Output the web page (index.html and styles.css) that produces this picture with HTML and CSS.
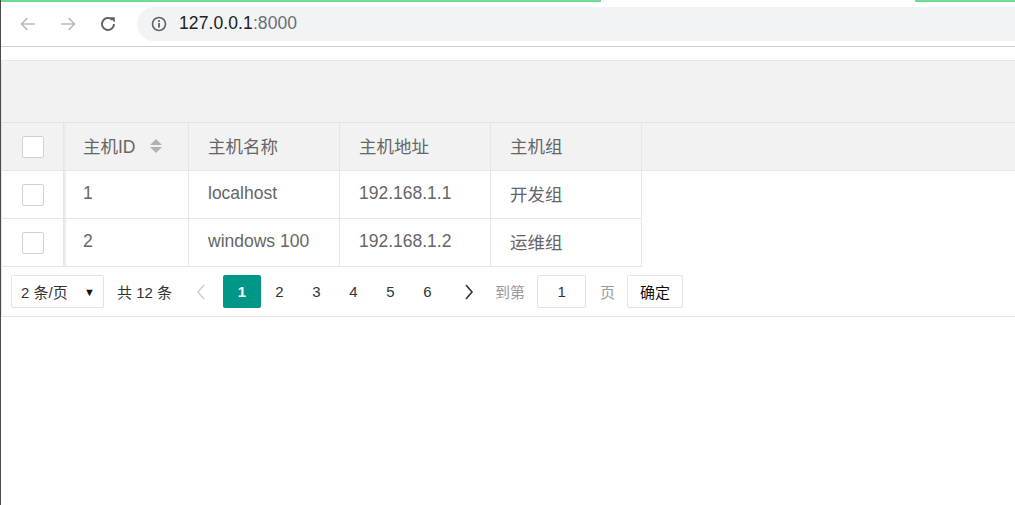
FILE: index.html
```html
<!DOCTYPE html>
<html lang="zh-CN">

<head>
    <meta charset="UTF-8">
    <meta name="viewport" content="width=device-width, initial-scale=1.0">
    <title>主机列表</title>
    <link rel="stylesheet" href="styles.css">
</head>

<body>
    <div class="frame">
        <div class="browser">
            <div class="loadbar"><span class="load-a"></span><span class="load-b"></span></div>
            <div class="nav">
                <svg class="nav-btn" width="20" height="20" viewBox="0 0 20 20"><path d="M17 10H3.5M9.5 4L3.5 10l6 6" fill="none" stroke="#bdbdbd" stroke-width="1.7"/></svg>
                <svg class="nav-btn" width="20" height="20" viewBox="0 0 20 20"><path d="M3 10h13.5M10.5 4l6 6-6 6" fill="none" stroke="#bdbdbd" stroke-width="1.7"/></svg>
                <svg class="nav-btn" width="20" height="20" viewBox="0 0 20 20"><path d="M16 10a6 6 0 1 1-1.8-4.3" fill="none" stroke="#5f6368" stroke-width="2"/><path d="M11.5 3.2h5.3v5.3z" fill="#5f6368"/></svg>
            </div>
            <div class="omnibox">
                <svg width="16" height="16" viewBox="0 0 16 16"><circle cx="8" cy="8" r="6.5" fill="none" stroke="#5f6368" stroke-width="1.6"/><rect x="7.1" y="7" width="1.8" height="4.6" fill="#5f6368"/><rect x="7.1" y="4.2" width="1.8" height="1.8" fill="#5f6368"/></svg>
                <span class="url">127.0.0.1<span class="port">:8000</span></span>
            </div>
        </div>

        <div class="page">
            <div class="table-view">
                <div class="table-tool"></div>

                <div class="row head">
                    <div class="cell col-check"><span class="checkbox"></span></div>
                    <div class="cell col-id">主机ID <span class="sort"><i class="up"></i><i class="down"></i></span></div>
                    <div class="cell col-name">主机名称</div>
                    <div class="cell col-addr">主机地址</div>
                    <div class="cell col-group">主机组</div>
                    <div class="cell col-fill"></div>
                </div>

                <div class="table-body">
                    <div class="row">
                        <div class="cell col-check"><span class="checkbox"></span></div>
                        <div class="cell col-id">1</div>
                        <div class="cell col-name">localhost</div>
                        <div class="cell col-addr">192.168.1.1</div>
                        <div class="cell col-group">开发组</div>
                    </div>
                    <div class="row">
                        <div class="cell col-check"><span class="checkbox"></span></div>
                        <div class="cell col-id">2</div>
                        <div class="cell col-name">windows 100</div>
                        <div class="cell col-addr">192.168.1.2</div>
                        <div class="cell col-group">运维组</div>
                    </div>
                </div>

                <div class="laypage">
                    <div class="limits"><span>2 条/页</span><span class="caret">▼</span></div>
                    <span class="count">共 12 条</span>
                    <span class="page-prev">
                        <svg width="12" height="18" viewBox="0 0 12 18"><path d="M9 2L3 9l6 7" fill="none" stroke="#d2d2d2" stroke-width="1.6"/></svg>
                    </span>
                    <span class="page-num current">1</span>
                    <span class="page-num">2</span>
                    <span class="page-num">3</span>
                    <span class="page-num">4</span>
                    <span class="page-num">5</span>
                    <span class="page-num">6</span>
                    <span class="page-next">
                        <svg width="12" height="18" viewBox="0 0 12 18"><path d="M3 2l6 7-6 7" fill="none" stroke="#333" stroke-width="1.6"/></svg>
                    </span>
                    <span class="skip skip-to">到第</span>
                    <span class="skip-input">1</span>
                    <span class="skip">页</span>
                    <span class="skip-btn">确定</span>
                </div>
            </div>
        </div>
    </div>
</body>

</html>
```

FILE: styles.css
```css
body {
    margin: 0;
    padding: 0;
    background: #ffffff;
    font-family: "Liberation Sans", Arial, "Noto Sans CJK SC", sans-serif;
    overflow: hidden;
}

.frame {
    height: 505px;
    border-left: 1px solid #4a4a4a;
    box-sizing: border-box;
}

/* 浏览器地址栏 */
.browser {
    position: relative;
    height: 46px;
    border-bottom: 1px solid #d0d0d0;
    display: flex;
    align-items: center;
}

.loadbar {
    position: absolute;
    top: 0;
    left: 0;
    right: 0;
    height: 2px;
}

.loadbar span {
    position: absolute;
    top: 0;
    height: 2px;
    background: #6fdc96;
}

.load-a {
    left: 0;
    width: 600px;
}

.load-b {
    left: 914px;
    right: 0;
}

.nav {
    display: flex;
    align-items: center;
    gap: 20px;
    padding-left: 17px;
    padding-top: 1px;
}

.nav-btn {
    display: block;
}

.omnibox {
    margin-left: 19px;
    margin-top: 1px;
    flex: 1;
    height: 34px;
    border-radius: 17px 0 0 17px;
    background: #f1f3f4;
    display: flex;
    align-items: center;
    padding-left: 14px;
    gap: 12px;
}

.omnibox svg {
    display: block;
}

.url {
    font-size: 17.5px;
    color: #202124;
    letter-spacing: 0.1px;
}

.port {
    color: #6b6f73;
}

/* 表格 */
.page {
    padding-top: 13px;
}

.table-view {
    border-left: 1px solid #e6e6e6;
    color: #666666;
    font-size: 17.5px;
}

.table-tool {
    height: 61px;
    background: #f2f2f2;
    border-top: 1px solid #e8e8e8;
    border-bottom: 1px solid #e2e2e2;
}

.row {
    display: flex;
    height: 48px;
    border-bottom: 1px solid #e6e6e6;
    box-sizing: border-box;
}

.row.head {
    background: #f2f2f2;
}

.cell {
    display: flex;
    align-items: center;
    padding-left: 19px;
    padding-bottom: 2px;
    box-sizing: border-box;
    border-right: 1px solid #e6e6e6;
    flex-shrink: 0;
}

.col-check {
    width: 62px;
    padding-left: 0;
    padding-bottom: 0;
    justify-content: center;
    box-shadow: 2px 0 0 #ececec;
}

.col-id {
    width: 125px;
}

.col-name,
.col-addr,
.col-group {
    width: 151px;
}

.col-fill {
    flex: 1;
    border-right: 0;
}

.table-body {
    width: 640px;
}

.checkbox {
    width: 22px;
    height: 22px;
    border: 1px solid #d2d2d2;
    border-radius: 2px;
    background: #ffffff;
    box-sizing: border-box;
}

.sort {
    display: inline-flex;
    flex-direction: column;
    gap: 2px;
    margin-left: 14px;
}

.sort i {
    display: block;
    width: 0;
    height: 0;
    border-left: 6px solid transparent;
    border-right: 6px solid transparent;
}

.sort .up {
    border-bottom: 6px solid #b2b2b2;
}

.sort .down {
    border-top: 6px solid #b2b2b2;
}

/* 分页 */
.laypage {
    height: 50px;
    border-bottom: 1px solid #e6e6e6;
    box-sizing: border-box;
    display: flex;
    align-items: center;
    padding-left: 9px;
    font-size: 15px;
    color: #333333;
    white-space: nowrap;
}

.laypage > * {
    flex-shrink: 0;
}

.limits {
    width: 93px;
    height: 33px;
    border: 1px solid #e2e2e2;
    border-radius: 2px;
    box-sizing: border-box;
    display: flex;
    align-items: center;
    justify-content: space-between;
    padding: 0 8px 0 9px;
}

.caret {
    font-size: 11px;
    color: #111;
}

.count {
    margin-left: 13px;
}

.page-prev,
.page-next {
    display: flex;
    align-items: center;
    width: 24px;
    justify-content: center;
}

.page-prev {
    margin-left: 17px;
    margin-right: 10px;
}

.page-next {
    margin-left: 11px;
}

.page-num {
    width: 37px;
    height: 33px;
    display: flex;
    align-items: center;
    justify-content: center;
}

.page-num.current {
    width: 38px;
    background: #009688;
    color: #ffffff;
    border-radius: 2px;
    font-weight: bold;
}

.skip {
    color: #999999;
    margin-right: 12px;
}

.skip-to {
    margin-left: 14px;
}

.skip-input {
    width: 49px;
    height: 33px;
    border: 1px solid #e2e2e2;
    border-radius: 2px;
    box-sizing: border-box;
    display: flex;
    align-items: center;
    justify-content: center;
    margin-right: 14px;
}

.skip-btn {
    width: 56px;
    height: 33px;
    border: 1px solid #e2e2e2;
    border-radius: 2px;
    box-sizing: border-box;
    display: flex;
    align-items: center;
    justify-content: center;
    color: #111;
}
```
